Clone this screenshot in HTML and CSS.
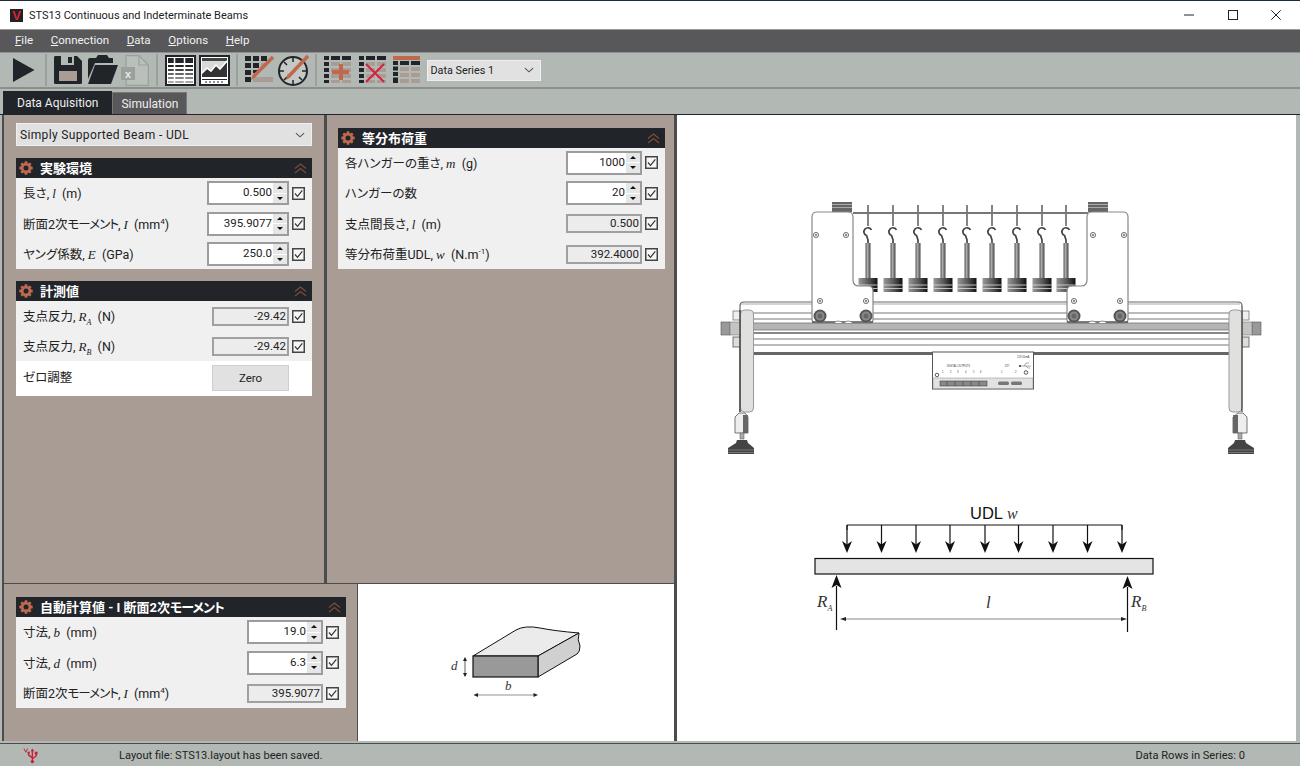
FILE: index.html
```html
<!DOCTYPE html>
<html lang="ja">
<head>
<meta charset="utf-8">
<title>STS13 Continuous and Indeterminate Beams</title>
<link rel="stylesheet" href="styles.css">
</head>
<body>
<svg class="sprite" width="0" height="0" aria-hidden="true">
  <defs>
    <g id="gear">
      <circle cx="7" cy="7" r="3.9" fill="none" stroke="#bd6a50" stroke-width="2.6"/>
      <g fill="#bd6a50">
        <rect x="5.6" y="0.3" width="2.8" height="13.4" rx=".5"/>
        <rect x="5.6" y="0.3" width="2.8" height="13.4" rx=".5" transform="rotate(45 7 7)"/>
        <rect x="5.6" y="0.3" width="2.8" height="13.4" rx=".5" transform="rotate(90 7 7)"/>
        <rect x="5.6" y="0.3" width="2.8" height="13.4" rx=".5" transform="rotate(135 7 7)"/>
      </g>
      <circle cx="7" cy="7" r="2.5" fill="#212529"/>
    </g>
    <g id="chev"><path d="M1 5.5 6.500 1 12 5.500M1 10 6.500 5.500 12 10" fill="none" stroke="#7f4b3b" stroke-width="1.200"/></g>
    <g id="check"><rect x=".75" y=".75" width="11.500" height="11.500" fill="#f6f6f6" stroke="#444" stroke-width="1.500"/><path d="M3 6.500 5.500 9.300 10.300 3.300" fill="none" stroke="#333" stroke-width="1.200"/></g>
    <g id="down"><path d="M1 1 5.500 5 10 1" fill="none" stroke="#555" stroke-width="1.200"/></g>
    <linearGradient id="wg"><stop offset="0" stop-color="#9a9a9a"/><stop offset=".55" stop-color="#555"/><stop offset="1" stop-color="#111"/></linearGradient>
    <linearGradient id="sg"><stop offset="0" stop-color="#555"/><stop offset=".4" stop-color="#aaa"/><stop offset="1" stop-color="#444"/></linearGradient>
    <g id="hanger">
      <path d="M0 205V226" stroke="#333" stroke-width="1.200"/>
      <path d="M3.500 230A4 4 0 1 0 -1.500 235.500L0 240V244" fill="none" stroke="#444" stroke-width="1.700"/>
      <rect x="-2.500" y="243" width="5" height="36" fill="url(#sg)"/>
      <rect x="-9.500" y="278" width="19" height="14" fill="url(#wg)"/>
      <path d="M-9.500 285H9.500M-9.500 288.500H9.500" stroke="#ddd" stroke-width=".8"/>
    </g>
    <g id="screw"><circle r="2.600" fill="#eee" stroke="#777" stroke-width="1"/><circle r=".9" fill="#666"/></g>
    <g id="wheel"><circle r="6.500" fill="#555"/><circle r="4.500" fill="#888"/><circle r="2.500" fill="#666"/></g>
    <g id="darrow"><path d="M0 0V22" stroke="#111" stroke-width="1.200"/><path d="M-5 16 0 19.500 5 16 0 28Z" fill="#111"/></g>
  </defs>
</svg>
<div class="app">
  <header class="titlebar">
    <span class="logo">V</span>
    <span class="title">STS13 Continuous and Indeterminate Beams</span>
    <div class="winctl">
      <svg class="wc" viewBox="0 0 10 10"><path d="M0 5H10" stroke="#222" stroke-width="1"/></svg>
      <svg class="wc" viewBox="0 0 10 10"><rect x=".5" y=".5" width="9" height="9" fill="none" stroke="#222"/></svg>
      <svg class="wc" viewBox="0 0 10 10"><path d="M.3 .3 9.700 9.700M9.700 .3 .3 9.700" stroke="#222" stroke-width="1"/></svg>
    </div>
  </header>
  <nav class="menubar">
    <span><u>F</u>ile</span><span><u>C</u>onnection</span><span><u>D</u>ata</span><span><u>O</u>ptions</span><span><u>H</u>elp</span>
  </nav>
  <div class="toolbar">
    <svg class="ic play" viewBox="0 0 22 26"><path d="M0 1 21.500 13 0 25Z" fill="#212529"/></svg>
    <i class="sep s1"></i>
    <svg class="ic save" viewBox="0 0 28 28"><path d="M1 0H23L28 5V26.500Q28 28 26.500 28H1.500Q0 28 0 26.500V1.500Q0 0 1 0Z" fill="#212529"/><rect x="7" y="0" width="13" height="9" fill="#b2b8b3"/><rect x="14" y="1" width="4" height="6" fill="#212529"/><rect x="5" y="15" width="18" height="10" fill="#a89c94"/></svg>
    <svg class="ic open" viewBox="0 0 30 30"><path d="M0 5Q0 3 2 3H8L10 0H19L21 3H25V8H7L0 24Z" fill="#212529"/><path d="M7 10H30L23 29H0Z" fill="#212529"/></svg>
    <svg class="ic excel" viewBox="0 0 28 31"><path d="M5 .7H18L27.300 10V30.300H5Z" fill="#b9bfba" stroke="#9aa09b" stroke-width="1.200"/><path d="M18 .7V10H27.300" fill="none" stroke="#9aa09b" stroke-width="1.200"/><rect x="0" y="12" width="14" height="13" fill="#9aa09b"/><text x="7" y="22.500" class="xl">x</text></svg>
    <i class="sep s2"></i>
    <svg class="ic tbl" viewBox="0 0 31 31"><rect x="1" y="1" width="29" height="29" fill="#fff" stroke="#212529" stroke-width="2"/><path d="M3 3H28V8H3ZM3 10H28V12H3Z" fill="#212529"/><path d="M3 14H28V16H3Z" fill="#444"/><path d="M3 18H28V20H3Z" fill="#666"/><path d="M3 22H28V24H3Z" fill="#888"/><path d="M3 26H28V28H3Z" fill="#aaa"/><path d="M9.500 3V28M19.500 3V28" stroke="#fff" stroke-width="1.500"/></svg>
    <svg class="ic chart" viewBox="0 0 31 31"><rect x="1" y="1" width="29" height="29" fill="#fff" stroke="#212529" stroke-width="2"/><path d="M3 3H28V6H3Z" fill="#444"/><path d="M3 6H28V21H3Z" fill="#d8d8d8"/><path d="M3 19 8 14 12 17 17 11 21 15 28 7V22H3Z" fill="#333"/><path d="M3 18 8 13 12 16 17 10 21 14 28 6" fill="none" stroke="#fff" stroke-width="1.300"/><path d="M3 23H28" stroke="#fff" stroke-width="1.500"/><path d="M3 24H28V25H3Z" fill="#212529"/><path d="M7 26V28M11 26V28M15 26V28M19 26V28M23 26V28" stroke="#212529"/></svg>
    <i class="sep s3"></i>
    <svg class="ic penc" viewBox="0 0 30 30"><path d="M0 1H6V6H0ZM8 1H14V6H8ZM16 1H22V6H16ZM0 8H6V13H0ZM8 8H14V13H8ZM0 15H6V20H0ZM8 15H14V18H8ZM0 22H6V27H0Z" fill="#212529"/><path d="M16 8H22V10L16 14ZM8 22H28V27H8Z" fill="#a89c94"/><path d="M28 2 9 21" stroke="#c0674c" stroke-width="3.500"/><path d="M6 25 8 19 11 22Z" fill="#c0674c"/></svg>
    <svg class="ic gauge" viewBox="0 0 32 32"><circle cx="15" cy="17" r="14" fill="#c4c9c5" stroke="#212529" stroke-width="2"/><path d="M15 4V8M15 26V30M2 17H6M24 17H28M6 8 9 11M24 8 21 11M6 26 9 23M24 26 21 23" stroke="#212529" stroke-width="1.500"/><path d="M30 2 11 22" stroke="#c0674c" stroke-width="3.500"/><path d="M8 26 9.500 20 13 23Z" fill="#c0674c"/></svg>
    <i class="sep s4"></i>
    <svg class="ic grid" viewBox="0 0 28 28"><path d="M0 0H5V4H0ZM7 0H16V4H7ZM18 0H27V4H18ZM0 6H5V10H0ZM0 12H5V16H0ZM0 18H5V22H0ZM0 24H5V27H0Z" fill="#212529"/><path d="M7 6H16V10H7ZM18 6H27V10H18ZM7 18H16V22H7ZM18 12H27V16H18ZM18 18H27V22H18ZM7 24H16V27H7ZM18 24H27V27H18ZM7 12H16V16H7Z" fill="#a89c94"/><path d="M15 8H19V14H25V18H19V24H15V18H8V14H15Z" fill="#c0674c"/></svg>
    <svg class="ic grid" viewBox="0 0 28 28"><path d="M0 0H5V4H0ZM7 0H16V4H7ZM18 0H27V4H18ZM0 6H5V10H0ZM0 12H5V16H0ZM0 18H5V22H0ZM0 24H5V27H0Z" fill="#212529"/><path d="M7 6H16V10H7ZM18 6H27V10H18ZM7 18H16V22H7ZM18 12H27V16H18ZM18 18H27V22H18ZM7 24H16V27H7ZM18 24H27V27H18ZM7 12H16V16H7Z" fill="#a89c94"/><path d="M7 8 25 26M25 8 7 26" stroke="#d8203c" stroke-width="2"/></svg>
    <svg class="ic grid" viewBox="0 0 28 28"><path d="M0 0H27V4H0Z" fill="#c0674c"/><path d="M0 5H5V9H0ZM0 10.500H5V14.500H0ZM0 16H5V20H0ZM0 21.500H5V27H0ZM7 5H16V9H7ZM18 5H27V9H18Z" fill="#212529"/><path d="M7 11H16V15H7ZM18 11H27V15H18ZM7 17H16V21H7ZM18 17H27V21H18ZM7 23H16V27H7ZM18 23H27V27H18Z" fill="#a89c94"/></svg>
    <div class="combo series"><span>Data Series 1</span><svg class="dn" viewBox="0 0 11 6"><use href="#down"/></svg></div>
  </div>
  <div class="tabs"><span class="tab on">Data Aquisition</span><span class="tab">Simulation</span></div>
  <main class="main">
    <div class="leftpane">
      <div class="toprow">
        <section class="col colA">
          <div class="combo scenario"><span>Simply Supported Beam - UDL</span><svg class="dn" viewBox="0 0 11 6"><use href="#down"/></svg></div>
          <div class="panel">
            <div class="phead"><svg class="gear" viewBox="0 0 14 14"><use href="#gear"/></svg><span>実験環境</span><svg class="chev" viewBox="0 0 13 11"><use href="#chev"/></svg></div>
            <div class="pbody">
              <div class="row"><span class="lbl">長さ, <i>l</i>&nbsp; (m)</span><div class="spin w82"><span>0.500</span><div class="arrows"><b></b><b></b></div></div><svg class="cb" viewBox="0 0 13 13"><use href="#check"/></svg></div>
              <div class="row"><span class="lbl">断面2次<span class="kn">モーメント</span>, <i>I</i>&nbsp; (mm<sup>4</sup>)</span><div class="spin w82"><span>395.9077</span><div class="arrows"><b></b><b></b></div></div><svg class="cb" viewBox="0 0 13 13"><use href="#check"/></svg></div>
              <div class="row"><span class="lbl">ヤング係数, <i>E</i>&nbsp; (GPa)</span><div class="spin w82"><span>250.0</span><div class="arrows"><b></b><b></b></div></div><svg class="cb" viewBox="0 0 13 13"><use href="#check"/></svg></div>
            </div>
          </div>
          <div class="panel">
            <div class="phead"><svg class="gear" viewBox="0 0 14 14"><use href="#gear"/></svg><span>計測値</span><svg class="chev" viewBox="0 0 13 11"><use href="#chev"/></svg></div>
            <div class="meas">
              <div class="row r30"><span class="lbl">支点反力, <i>R<sub>A</sub></i>&nbsp; (N)</span><div class="ro w77">-29.42</div><svg class="cb" viewBox="0 0 13 13"><use href="#check"/></svg></div>
              <div class="row r30"><span class="lbl">支点反力, <i>R<sub>B</sub></i>&nbsp; (N)</span><div class="ro w77">-29.42</div><svg class="cb" viewBox="0 0 13 13"><use href="#check"/></svg></div>
              <div class="row zero"><span class="lbl">ゼロ調整</span><button class="btn">Zero</button></div>
            </div>
          </div>
        </section>
        <section class="col colB">
          <div class="panel">
            <div class="phead"><svg class="gear" viewBox="0 0 14 14"><use href="#gear"/></svg><span>等分布荷重</span><svg class="chev" viewBox="0 0 13 11"><use href="#chev"/></svg></div>
            <div class="pbody four">
              <div class="row"><span class="lbl">各ハンガーの重さ, <i>m</i>&nbsp; (g)</span><div class="spin w76"><span>1000</span><div class="arrows"><b></b><b></b></div></div><svg class="cb" viewBox="0 0 13 13"><use href="#check"/></svg></div>
              <div class="row"><span class="lbl">ハンガーの数</span><div class="spin w76"><span>20</span><div class="arrows"><b></b><b></b></div></div><svg class="cb" viewBox="0 0 13 13"><use href="#check"/></svg></div>
              <div class="row"><span class="lbl">支点間長さ, <i>l</i>&nbsp; (m)</span><div class="ro w76">0.500</div><svg class="cb" viewBox="0 0 13 13"><use href="#check"/></svg></div>
              <div class="row"><span class="lbl">等分布荷重UDL, <i>w</i>&nbsp; (N.m<sup>-1</sup>)</span><div class="ro w76">392.4000</div><svg class="cb" viewBox="0 0 13 13"><use href="#check"/></svg></div>
            </div>
          </div>
        </section>
      </div>
      <div class="botrow">
        <section class="col colC">
          <div class="panel">
            <div class="phead"><svg class="gear" viewBox="0 0 14 14"><use href="#gear"/></svg><span>自動計算値 - I 断面2次<span class="kn">モーメント</span></span><svg class="chev" viewBox="0 0 13 11"><use href="#chev"/></svg></div>
            <div class="pbody">
              <div class="row"><span class="lbl">寸法, <i>b</i>&nbsp; (mm)</span><div class="spin w76"><span>19.0</span><div class="arrows"><b></b><b></b></div></div><svg class="cb" viewBox="0 0 13 13"><use href="#check"/></svg></div>
              <div class="row"><span class="lbl">寸法, <i>d</i>&nbsp; (mm)</span><div class="spin w76"><span>6.3</span><div class="arrows"><b></b><b></b></div></div><svg class="cb" viewBox="0 0 13 13"><use href="#check"/></svg></div>
              <div class="row"><span class="lbl">断面2次<span class="kn">モーメント</span>, <i>I</i>&nbsp; (mm<sup>4</sup>)</span><div class="ro w76">395.9077</div><svg class="cb" viewBox="0 0 13 13"><use href="#check"/></svg></div>
            </div>
          </div>
        </section>
        <div class="section-fig">
          <svg class="figsvg" viewBox="358 584 316 157">
            <path d="M473 656 516 630Q525 625 540 628 T579 633L538 656Z" fill="#ebebeb" stroke="#111" stroke-width="1"/>
            <path d="M538 656 579 633Q577 640 580 646 580 652 577 654L538 677Z" fill="#d0d0d0" stroke="#111" stroke-width="1"/>
            <rect x="473" y="656" width="65" height="21" fill="#999" stroke="#111" stroke-width="1.200"/>
            <path d="M465 658V676" stroke="#333" stroke-width=".8"/><path d="M465 657 463 661H467ZM465 677 463 673H467Z" fill="#222"/>
            <path d="M476 695H536" stroke="#777" stroke-width=".8"/><path d="M473.500 695 478 693V697ZM538 695 533.500 693V697Z" fill="#222"/>
            <text x="451" y="670" class="mt m13">d</text><text x="505" y="690" class="mt m13">b</text>
          </svg>
        </div>
      </div>
    </div>
    <div class="rightpane">
      <svg class="figsvg" viewBox="677 115 619 626">
        <!-- rail -->
        <g fill="none">
          <path d="M740 412V306Q740 302 744 302H1238Q1242 302 1242 306" stroke="#666" stroke-width="1.200"/>
          <path d="M741 304H1240" stroke="#aaa" stroke-width="1"/>
          <path d="M741 313H1229M741 319H1229M741 339H1229M741 345H1229" stroke="#777" stroke-width="1"/>
          <rect x="741" y="323" width="488" height="7" fill="#b5b5b5" stroke="#777" stroke-width=".8"/>
          <path d="M741 333H1229" stroke="#111" stroke-width="1"/>
          <path d="M741 353.500H1229" stroke="#666" stroke-width="3"/>
        </g>
        <!-- hangers -->
        <use href="#hanger" x="868"/><use href="#hanger" x="893"/><use href="#hanger" x="918"/><use href="#hanger" x="943"/><use href="#hanger" x="967"/><use href="#hanger" x="992"/><use href="#hanger" x="1017"/><use href="#hanger" x="1042"/><use href="#hanger" x="1066"/>
        <path d="M853 213H1088" stroke="#777" stroke-width="2"/>
        <!-- carriages -->
        <rect x="832" y="202" width="20" height="10" fill="#666"/><path d="M832 204.500H852M832 207.500H852" stroke="#aaa"/>
        <rect x="1088" y="202" width="20" height="10" fill="#666"/><path d="M1088 204.500H1108M1088 207.500H1108" stroke="#aaa"/>
        <path d="M817 212H848Q853 212 853 217V280Q853 286 859 286H868Q873 286 873 291V320Q873 323 870 323H816Q812 323 812 319V217Q812 212 817 212Z" fill="#fff" stroke="#888" stroke-width="1.200"/>
        <path d="M1092 212H1123Q1128 212 1128 217V319Q1128 323 1124 323H1070Q1067 323 1067 320V291Q1067 286 1072 286H1081Q1087 286 1087 280V217Q1087 212 1092 212Z" fill="#fff" stroke="#888" stroke-width="1.200"/>
        <path d="M812 322H873M1067 322H1128" stroke="#555" stroke-width="1.500"/>
        <path d="M834 323Q838 319 843 323M844 323Q848 319 853 323M1088 323Q1092 319 1097 323M1098 323Q1102 319 1107 323" fill="#fff" stroke="#777" stroke-width=".8"/>
        <use href="#screw" x="816" y="235"/><use href="#screw" x="846" y="235"/><use href="#screw" x="820" y="301"/><use href="#screw" x="866" y="301"/>
        <use href="#screw" x="1093" y="235"/><use href="#screw" x="1124" y="235"/><use href="#screw" x="1074" y="301"/><use href="#screw" x="1120" y="301"/>
        <use href="#wheel" x="820" y="316"/><use href="#wheel" x="866" y="316"/><use href="#wheel" x="1074" y="316"/><use href="#wheel" x="1120" y="316"/>
        <!-- left end -->
        <rect x="721" y="322" width="9" height="13" fill="#999" stroke="#555" stroke-width=".6"/>
        <rect x="730" y="322" width="10" height="13" fill="#c4c4c4" stroke="#777" stroke-width=".6"/>
        <rect x="733" y="311" width="7" height="9" fill="#eee" stroke="#777" stroke-width=".8"/>
        <rect x="733" y="337" width="7" height="10" fill="#ddd" stroke="#555" stroke-width=".8"/>
        <rect x="740.500" y="310" width="13" height="102" rx="4" fill="#e0e1de" stroke="#999" stroke-width="1"/>
        <path d="M740 310V412" stroke="#222" stroke-width="1"/>
        <path d="M739 413 735 417V433H748V417L745 413Z" fill="#eee" stroke="#555" stroke-width=".8"/>
        <rect x="743" y="415" width="5" height="18" fill="#666"/>
        <rect x="740" y="433" width="4" height="6" fill="#aaa" stroke="#555" stroke-width=".5"/>
        <path d="M737 440H747L748 443 754 448V454H728V448L736 443Z" fill="#444"/>
        <path d="M728 450H754M728 452.500H754" stroke="#999" stroke-width=".6"/>
        <!-- right end -->
        <rect x="1252" y="322" width="9" height="13" fill="#999" stroke="#555" stroke-width=".6"/>
        <rect x="1242" y="322" width="10" height="13" fill="#c4c4c4" stroke="#777" stroke-width=".6"/>
        <rect x="1242" y="311" width="7" height="9" fill="#eee" stroke="#777" stroke-width=".8"/>
        <rect x="1242" y="337" width="7" height="10" fill="#ddd" stroke="#555" stroke-width=".8"/>
        <rect x="1229" y="310" width="13" height="102" rx="4" fill="#e0e1de" stroke="#999" stroke-width="1"/>
        <path d="M1242 306V412" stroke="#222" stroke-width="1"/>
        <path d="M1238 413 1233 417V433H1247V417L1243 413Z" fill="#eee" stroke="#555" stroke-width=".8"/>
        <rect x="1233" y="415" width="5" height="18" fill="#666"/>
        <rect x="1238" y="433" width="4" height="6" fill="#aaa" stroke="#555" stroke-width=".5"/>
        <path d="M1235 440H1245L1246 443 1254 448V454H1228V448L1234 443Z" fill="#444"/>
        <path d="M1228 450H1254M1228 452.500H1254" stroke="#999" stroke-width=".6"/>
        <!-- control box -->
        <rect x="932.500" y="352" width="101" height="37" fill="#fff" stroke="#555" stroke-width="1"/>
        <rect x="933" y="378" width="100" height="10.500" fill="#e2e2e2" stroke="#888" stroke-width=".5"/>
        <rect x="940" y="381" width="47" height="5" fill="#888" stroke="#333" stroke-width=".5"/>
        <path d="M947 381V386M955 381V386M963 381V386M971 381V386M979 381V386" stroke="#333" stroke-width=".5"/>
        <rect x="998" y="381.500" width="11" height="3.500" rx="1.500" fill="#777"/><rect x="1011" y="381.500" width="11" height="3.500" rx="1.500" fill="#777"/>
        <text x="947" y="367" class="tiny">DIGITAL OUTPUTS</text>
        <text x="1005" y="367" class="tiny">DTI</text>
        <text x="1017" y="358" class="tiny">12V 50mA</text>
        <text x="942" y="373" class="tiny">1</text><text x="950" y="373" class="tiny">2</text><text x="957" y="373" class="tiny">3</text><text x="965" y="373" class="tiny">4</text><text x="973" y="373" class="tiny">5</text><text x="980" y="373" class="tiny">6</text><text x="1001" y="373" class="tiny">1</text><text x="1015" y="373" class="tiny">2</text>
        <circle cx="937" cy="375" r="1.800" fill="#fff" stroke="#333" stroke-width=".8"/><circle cx="1026" cy="372.500" r="1.800" fill="#fff" stroke="#333" stroke-width=".8"/>
        <circle cx="1020" cy="366" r="1" fill="#222"/><path d="M1021 366H1031M1024 366 1026 363H1029M1026 366 1028 368H1030" fill="none" stroke="#555" stroke-width=".5"/>
        <!-- beam diagram -->
        <text x="970" y="519" class="udl">UDL <tspan class="mt m16">w</tspan></text>
        <path d="M847 530V525H1122V530" fill="none" stroke="#111" stroke-width="1"/>
        <use href="#darrow" x="847" y="525"/><use href="#darrow" x="881.500" y="525"/><use href="#darrow" x="916" y="525"/><use href="#darrow" x="950" y="525"/><use href="#darrow" x="985" y="525"/><use href="#darrow" x="1018.500" y="525"/><use href="#darrow" x="1053" y="525"/><use href="#darrow" x="1087.500" y="525"/><use href="#darrow" x="1122" y="525"/>
        <rect x="815" y="558.500" width="338" height="15.500" fill="#e4e4e4" stroke="#111" stroke-width="1.200"/>
        <path d="M836.500 586V630M1127.500 587V632" stroke="#111" stroke-width="1.200"/>
        <path d="M836.500 575 841.500 588 836.500 585 831.500 588ZM1127.500 576 1132.500 589 1127.500 586 1122.500 589Z" fill="#111"/>
        <path d="M843 619H1123" stroke="#666" stroke-width=".8"/><path d="M840 619 846 617V621ZM1127 619 1121 617V621Z" fill="#222"/>
        <text x="817" y="607" class="mt m17">R<tspan class="subt" dy="4">A</tspan></text>
        <text x="986" y="608" class="mt m17">l</text>
        <text x="1131" y="607" class="mt m17">R<tspan class="subt" dy="4">B</tspan></text>
      </svg>
    </div>
  </main>
  <footer class="status">
    <svg class="usb" viewBox="0 0 16 17"><path d="M1 1 3 5 5 1" fill="none" stroke="#c5213a" stroke-width="1"/><path d="M10 3V15M10 11 6 8V6M10 12 14 9V6" fill="none" stroke="#c5213a" stroke-width="1.500"/><path d="M10 1 8 4H12Z" fill="#c5213a"/><circle cx="10" cy="15" r="1.800" fill="#c5213a"/><circle cx="6" cy="5.500" r="1.300" fill="#c5213a"/><rect x="12.500" y="4.500" width="3" height="3" fill="#c5213a"/></svg>
    <span class="msg">Layout file: STS13.layout has been saved.</span>
    <span class="rows">Data Rows in Series: 0</span>
  </footer>
</div>
</body>
</html>
```

FILE: styles.css
```css
* { box-sizing: border-box; }
html, body { margin: 0; padding: 0; }
body {
  width: 1300px;
  height: 766px;
  overflow: hidden;
  font-family: Roboto, "Noto Sans CJK JP", sans-serif;
  font-size: 11.5px;
  color: #222;
  font-feature-settings: "palt";
  background: #b2b8b3;
}
.sprite { position: absolute; }
.app { display: flex; flex-direction: column; width: 1300px; height: 766px; }

.titlebar {
  height: 29px;
  display: flex;
  align-items: center;
  background: #fff;
  border-top: 1px solid #1d2f3f;
  padding-left: 10px;
}
.logo {
  width: 13px;
  height: 13px;
  background: #222;
  color: #d8203c;
  font: bold 13px/13px "Liberation Sans", sans-serif;
  text-align: center;
}
.title { margin-left: 6px; font-size: 11px; }
.winctl { margin-left: auto; display: flex; gap: 33.500px; padding-right: 19px; }
.wc { width: 10px; height: 10px; display: block; }

.menubar {
  height: 23px;
  background: #58585a;
  border-top: 1px solid #9a9a9a;
  color: #f2f2f2;
  display: flex;
  align-items: center;
  gap: 17.700px;
  padding: 0 0 2px 15px;
  font-size: 11.5px;
}

.toolbar {
  height: 37px;
  display: flex;
  align-items: center;
  background: #b2b8b3;
  border-top: 1px solid #8c908d;
  border-bottom: 2px solid #8c908d;
  padding-left: 13px;
}
.ic { display: block; flex: none; }
.sep { display: block; width: 2px; height: 32px; background: #9ba09c; flex: none; }
.play { width: 22px; height: 26px; }
.s1 { margin: 0 7px 0 10px; }
.save { width: 28px; height: 28px; }
.open { width: 30px; height: 30px; margin-left: 6px; }
.excel { width: 28px; height: 31px; margin-left: 3px; }
.s2 { margin: 0 7px 0 7px; }
.tbl { width: 31px; height: 31px; }
.chart { width: 31px; height: 31px; margin-left: 3px; }
.s3 { margin: 0 7px 0 6px; }
.penc { width: 30px; height: 30px; }
.gauge { width: 32px; height: 32px; margin-left: 3px; }
.s4 { margin: 0 7px 0 5px; }
.grid { width: 28px; height: 28px; margin-right: 6.500px; }
.xl { font: bold 11px "Liberation Sans", sans-serif; fill: #e8e8e8; text-anchor: middle; }

.combo {
  display: flex;
  align-items: center;
  justify-content: space-between;
  background: #e1e1e1;
  border: 1px solid #efefef;
  padding: 0 3px;
}
.series { width: 114px; height: 21px; margin-left: -1px; font-size: 10.800px; }
.scenario { width: 296px; height: 23px; font-size: 12px; letter-spacing: .35px; }
.dn { width: 10px; height: 6px; margin-right: 3px; }

.tabs {
  height: 26px;
  display: flex;
  align-items: flex-end;
  padding-left: 3px;
  background: #b2b8b3;
  border-bottom: 1px solid #212529;
}
.tab {
  height: 22px;
  padding: 0 8px;
  background: #58585a;
  color: #eee;
  font-size: 12px;
  display: flex;
  align-items: center;
  border: 1px solid #777;
  border-bottom: 0;
}
.tab.on { height: 23px; padding: 0 13px; background: #212529; border-color: #212529; }

.main {
  height: 626px;
  display: flex;
  padding: 0 4px 0 2px;
  background: #b2b8b3;
}
.leftpane {
  width: 675px;
  height: 626px;
  background: #4c4c4c;
  border-left: 2px solid #4c4c4c;
  border-right: 3px solid #4c4c4c;
  display: flex;
  flex-direction: column;
  gap: 1px;
}
.toprow { height: 468px; display: flex; gap: 3px; }
.botrow { height: 157px; display: flex; gap: 1px; }
.col { background: #a89c94; }
.colA { width: 320px; padding: 8px 12px 0; display: flex; flex-direction: column; gap: 12px; }
.colB { flex: 1; padding: 13px 9px 0 11px; }
.colC { width: 353px; padding: 13px 11px 0 12px; }
.section-fig { flex: 1; background: #fff; }
.rightpane { flex: 1; background: #fff; height: 626px; }
.figsvg { display: block; width: 100%; height: 100%; }

.panel { background: #f0f0f0; }
.phead {
  height: 20px;
  background: #212529;
  color: #fff;
  display: flex;
  align-items: center;
  font-size: 13px;
  font-weight: 700;
  padding: 0 5px 2px 3px;
}
.gear { width: 14px; height: 14px; margin: 2px 7px 0 0; flex: none; }
.chev { width: 13px; height: 11px; margin: 2px 0 0 auto; }
.kn { letter-spacing: -1px; }
.pbody {
  display: flex;
  flex-direction: column;
  gap: 6.500px;
  padding: 3px 0;
}
.pbody.four { padding-top: 2.500px; }
.row {
  height: 24px;
  display: flex;
  align-items: center;
  padding: 0 7px;
}
.r30 { height: 30px; }
.zero { height: 35px; background: #fff; padding-right: 23px; }
.lbl { flex: 1; font-size: 12.500px; white-space: nowrap; padding-bottom: 1px; }
.zero .lbl { padding-bottom: 4px; }
.lbl i { font-family: "Liberation Serif", serif; font-style: italic; font-size: 13px; }
.lbl sup { font-size: 8px; line-height: 0; }
.lbl sub { font-size: 8px; line-height: 0; }
.spin {
  height: 24px;
  background: #fff;
  border: 2px solid #9c9c9c;
  display: flex;
  align-items: center;
  justify-content: flex-end;
  font-size: 11.500px;
}
.spin > span { padding-bottom: 2px; }
.w82 { width: 82px; }
.w76 { width: 76px; }
.w77 { width: 77px; }
.arrows { width: 14px; height: 20px; margin-left: 1px; display: flex; flex-direction: column; gap: 1px; }
.arrows b { flex: 1; background: #e6e6e6; display: flex; align-items: center; justify-content: center; }
.arrows b::before {
  content: "";
  border-left: 3px solid transparent;
  border-right: 3px solid transparent;
  border-bottom: 3px solid #111;
}
.arrows b + b::before { border-bottom: 0; border-top: 3px solid #111; }
.ro {
  height: 19px;
  background: #ececec;
  border: 2px solid #a0a0a0;
  padding-right: 1px;
  line-height: 14px;
  text-align: right;
  font-size: 11.500px;
}
.cb { width: 13px; height: 13px; margin-left: 3px; flex: none; }
.btn {
  width: 77px;
  height: 26px;
  margin-bottom: 1px;
  background: #e1e1e1;
  border: 1px solid #cfcfcf;
  font: inherit;
  font-size: 11.500px;
  color: #222;
  padding: 0;
}

.mt { font-family: "Liberation Serif", serif; font-style: italic; fill: #333; }
.m13 { font-size: 13px; }
.m16 { font-size: 16px; }
.m17 { font-size: 17px; }
.subt { font-size: 8px; }
.udl { font: 16.500px "Liberation Sans", sans-serif; fill: #111; }
.tiny { font: 2.600px "Liberation Sans", sans-serif; fill: #333; }

.status {
  margin-top: 2px;
  flex: 1;
  display: flex;
  align-items: center;
  background: #b2b8b3;
  border-top: 1px solid #4c4c4c;
  font-size: 11.100px;
  padding: 0 55px 0 23px;
}
.usb { width: 15px; height: 17px; }
.msg { margin-left: 81px; }
.rows { margin-left: auto; }
```
